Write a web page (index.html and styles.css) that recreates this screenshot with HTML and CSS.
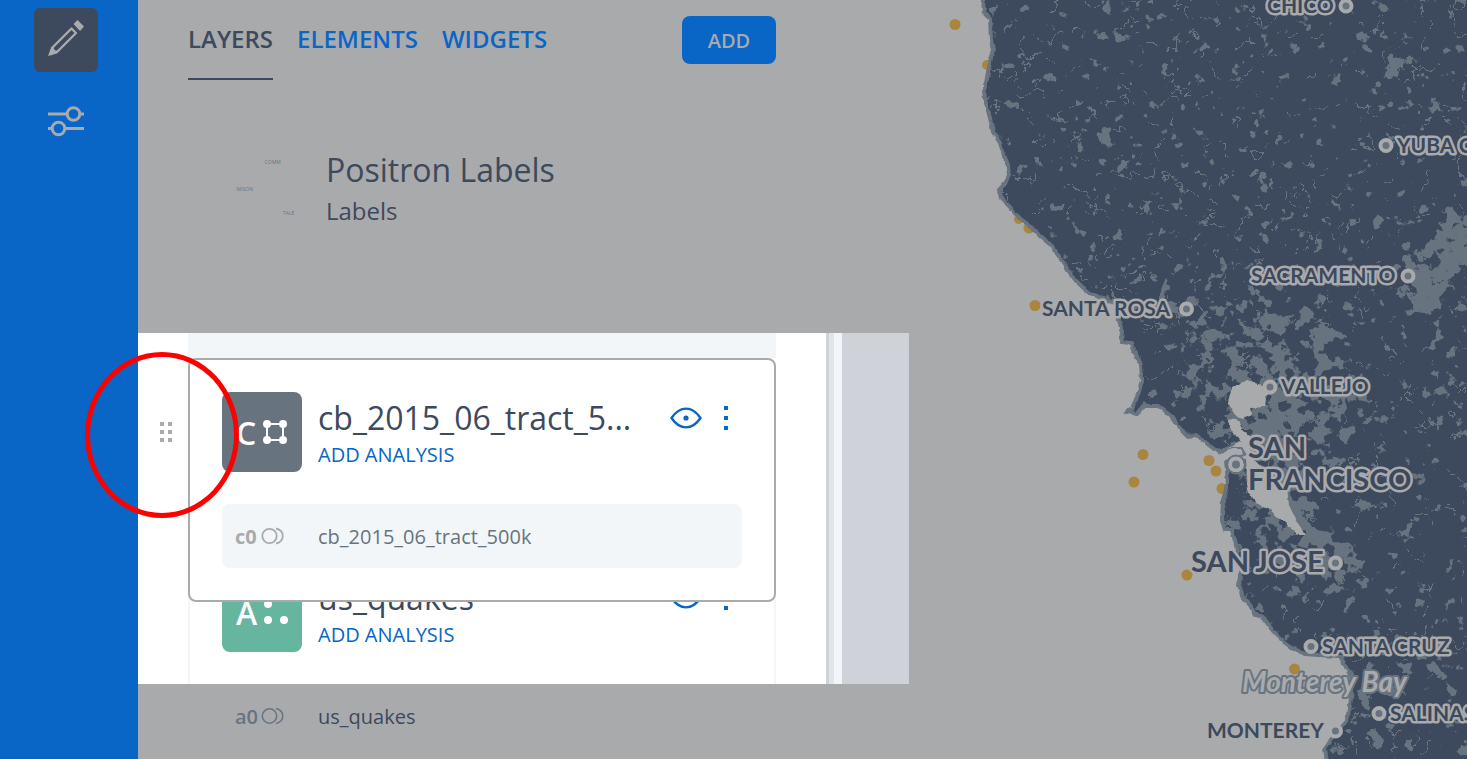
FILE: index.html
```html
<!DOCTYPE html>
<html lang="en">
<head>
<meta charset="utf-8">
<title>Layers</title>
<link rel="stylesheet" href="styles.css">
</head>
<body>
<div class="app">
  <nav class="sidebar" aria-label="Main">
    <button class="nav-button nav-active" aria-label="Edit">
      <svg width="64" height="64" viewBox="34 8 64 64" fill="none" stroke="#a9aaac" stroke-width="2.4">
        <path d="M71.500 28.500 L53 47 L50.500 54 L57.500 51.500 L76 33 Z" stroke-linejoin="round"/>
        <path d="M48 56 L51.500 46.500 L58 53 Z" fill="#a9aaac" stroke="none"/>
        <path d="M73.500 24 L77.500 20 L84 26.500 L80 31 Z" fill="#a9aaac" stroke="none"/>
      </svg>
    </button>
    <button class="nav-button" aria-label="Settings">
      <svg width="64" height="64" viewBox="34 89 64 64" fill="none" stroke="#a9aaac" stroke-width="3">
        <path d="M48 114 H67 M80 114 H84 M48 128.500 H52 M65 128.500 H84"/>
        <circle cx="73.500" cy="114" r="6.300"/>
        <circle cx="58.500" cy="128.500" r="6.300"/>
      </svg>
    </button>
  </nav>

  <main class="panel">
    <section class="panel-top">
      <header class="tabs">
        <button class="tab tab-active">LAYERS</button>
        <button class="tab">ELEMENTS</button>
        <button class="tab">WIDGETS</button>
        <button class="add">ADD</button>
      </header>
      <div class="basemap">
        <svg class="thumb" width="80" height="80" viewBox="222 150 80 80" aria-hidden="true">
          <text x="262" y="164">· COMM</text>
          <text x="234" y="191">· MISON</text>
          <text x="283" y="215">TALE</text>
        </svg>
        <div class="basemap-text">
          <h2 class="title">Positron Labels</h2>
          <p class="kind">Labels</p>
        </div>
      </div>
    </section>

    <section class="focus">
      <div class="list">
        <div class="gap-band"></div>
        <div class="drag-row">
          <button class="handle" aria-label="Reorder layer">
            <svg width="12" height="20" viewBox="0 0 12 20" fill="#a9aaac"><path d="M0 0h4v4H0zM8 0h4v4H8zM0 8h4v4H0zM8 8h4v4H8zM0 16h4v4H0zM8 16h4v4H8z"/></svg>
          </button>
          <article class="card card-lifted">
            <div class="card-head">
              <div class="badge"><span>C</span>
                <svg width="26" height="26" viewBox="0 0 26 26" fill="#fff"><path d="M5 5H21V21H5Z" fill="none" stroke="#fff" stroke-width="2"/><circle cx="5" cy="5" r="4"/><circle cx="21" cy="5" r="4"/><circle cx="5" cy="21" r="4"/><circle cx="21" cy="21" r="4"/></svg>
              </div>
              <div class="card-text">
                <h2 class="title">cb_2015_06_tract_5...</h2>
                <a class="analysis" href="#">ADD ANALYSIS</a>
              </div>
              <button class="icon-button" aria-label="Toggle visibility">
                <svg width="32" height="22" viewBox="0 0 32 22" fill="none" stroke="#0965c6" stroke-width="2.400"><path d="M1.500 11 C10 -1.500 22 -1.500 30.500 11 C22 23.500 10 23.500 1.500 11Z"/><circle cx="16" cy="11" r="2.600" fill="#0965c6" stroke="none"/></svg>
              </button>
              <button class="icon-button" aria-label="More">
                <svg width="4" height="24" viewBox="0 0 4 24" fill="#0965c6"><path d="M0 0h4v4H0zM0 10h4v4H0zM0 20h4v4H0z"/></svg>
              </button>
            </div>
            <div class="source">
              <b class="source-id">c0</b>
              <svg width="24" height="18" viewBox="0 0 24 18" fill="none" stroke="#a9aaac" stroke-width="1.800"><circle cx="8.500" cy="9" r="7.200"/><path d="M15 1.500 C24 3.500 24 14.500 15 16.500"/></svg>
              <span class="source-name">cb_2015_06_tract_500k</span>
            </div>
          </article>
        </div>
        <article class="card card-under">
          <div class="card-head">
            <div class="badge badge-green"><span>A</span>
              <svg width="26" height="26" viewBox="0 0 26 26" fill="#fff"><circle cx="5" cy="5" r="4"/><circle cx="5" cy="21" r="4"/><circle cx="21" cy="21" r="4"/></svg>
            </div>
            <div class="card-text">
              <h2 class="title">us_quakes</h2>
              <a class="analysis" href="#">ADD ANALYSIS</a>
            </div>
            <button class="icon-button" aria-label="Toggle visibility">
              <svg width="32" height="22" viewBox="0 0 32 22" fill="none" stroke="#0965c6" stroke-width="2.400"><path d="M1.500 11 C10 -1.500 22 -1.500 30.500 11 C22 23.500 10 23.500 1.500 11Z"/><circle cx="16" cy="11" r="2.600" fill="#0965c6" stroke="none"/></svg>
            </button>
            <button class="icon-button" aria-label="More">
              <svg width="4" height="24" viewBox="0 0 4 24" fill="#0965c6"><path d="M0 0h4v4H0zM0 10h4v4H0zM0 20h4v4H0z"/></svg>
            </button>
          </div>
        </article>
      </div>
      <div class="edge edge-a"></div>
      <div class="edge edge-b"></div>
      <div class="edge edge-c"></div>
      <div class="water"></div>
    </section>

    <section class="panel-bottom">
      <div class="source source-dim">
        <b class="source-id">a0</b>
        <svg width="24" height="18" viewBox="0 0 24 18" fill="none" stroke="#677480" stroke-width="1.500"><circle cx="8.500" cy="9" r="7.200"/><path d="M15 1.500 C24 3.500 24 14.500 15 16.500"/></svg>
        <span class="source-name">us_quakes</span>
      </div>
    </section>
  </main>

  <div class="map">
    <svg class="map-canvas" viewBox="909 0 558 759" preserveAspectRatio="xMinYMin slice" role="img" aria-label="Map of northern California">
      <defs>
        <clipPath id="land-clip"><use href="#land"/></clipPath>
        <filter id="rough" x="-5%" y="-5%" width="110%" height="110%">
          <feTurbulence type="fractalNoise" baseFrequency="0.150" numOctaves="2" seed="4"/>
          <feDisplacementMap in="SourceGraphic" scale="4" xChannelSelector="R" yChannelSelector="G"/>
        </filter>
        <filter id="veins" filterUnits="userSpaceOnUse" x="909" y="0" width="558" height="759" color-interpolation-filters="sRGB">
          <feTurbulence type="fractalNoise" baseFrequency="0.028" numOctaves="4" seed="21" result="t"/>
          <feColorMatrix values="0 0 0 0 0  0 0 0 0 0  0 0 0 0 0  1 0 0 0 0"/>
          <feComponentTransfer result="line"><feFuncA type="discrete" tableValues="0 0 0 0 0 0 0 0 0 0 0 0 0 0 0 0 0 0 0 0 0 0 0 0 0 0 0 0 0 0 1 0 0 0 0 0 0 0 0 0 0 0 0 0 0 0 0 0 0 0 0 0 0 0 0 0 0 0 0 0"/></feComponentTransfer>
          <feTurbulence type="fractalNoise" baseFrequency="0.060" numOctaves="3" seed="3"/>
          <feColorMatrix values="0 0 0 0 0  0 0 0 0 0  0 0 0 0 0  0 20 0 0 -10.400"/>
          <feComposite in="line" operator="in" result="x"/>
          <feFlood flood-color="#677480"/>
          <feComposite in2="x" operator="in"/>
        </filter>
        <filter id="urban" filterUnits="userSpaceOnUse" x="909" y="0" width="558" height="759" color-interpolation-filters="sRGB">
          <feTurbulence type="fractalNoise" baseFrequency="0.070" numOctaves="4" seed="7"/>
          <feColorMatrix values="0 0 0 0 0  0 0 0 0 0  0 0 0 0 0  1 0 0 0 0" result="n"/>
          <feGaussianBlur in="SourceAlpha" stdDeviation="8" result="d"/>
          <feComposite in="n" in2="d" operator="arithmetic" k1="0" k2="1" k3="0.400" k4="0"/>
          <feComponentTransfer result="x"><feFuncA type="linear" slope="20" intercept="-13.600"/></feComponentTransfer>
          <feFlood flood-color="#677480"/>
          <feComposite in2="x" operator="in"/>
        </filter>
      </defs>

      <g class="quakes">
        <circle cx="955" cy="24.500" r="5.500"/><circle cx="987" cy="65" r="5"/><circle cx="1019" cy="219" r="5"/><circle cx="1029" cy="228" r="5.500"/>
        <circle cx="1035" cy="305.500" r="5.500"/><circle cx="1143" cy="454.500" r="5.500"/><circle cx="1134" cy="482" r="5.500"/>
        <circle cx="1209" cy="460.500" r="5.500"/><circle cx="1216" cy="471" r="5.500"/><circle cx="1222" cy="488.500" r="5.500"/>
        <circle cx="1187" cy="575" r="5.500"/><circle cx="1294.500" cy="669" r="5.500"/>
      </g>

      <g filter="url(#rough)">
        <path id="land" class="land" d="M982 -9 L984 12 990 18 991 40 993 50 990 62 988 72 986 83 984 90 985 100 990 118 993 132 1000 143 1004 155 1008 165 1009 175 1006 182 999 190 1001 198 1010 207 1018 217 1030 226 1040 236 1052 246 1060 258 1068 270 1076 281 1090 294 1104 299 1116 304 1119 320 1122 332 1121 342 1131 343 1134 352 1141 365 1142 380 1138 395 1132 408 1127 412 1137 414 1143 406 1158 406 1172 417 1182 431 1187 436 1196 435 1205 442 1218 452 1232 447 1242 447 1247 455 1226 462 1228 480 1223 500 1222 520 1225 530 1232 530 1236 545 1238 560 1242 568 1240 575 1239 585 1243 598 1250 605 1255 615 1263 617 1272 630 1283 641 1292 648 1305 654 1318 655 1340 656 1345 665 1350 675 1352 690 1350 705 1347 720 1338 730 1330 740 1325 748 1328 770 H1800 V-9 Z"/>
      </g>
      <g clip-path="url(#land-clip)">
        <path filter="url(#veins)" d="M909 0H1467V759H909Z"/>
        <g filter="url(#urban)" fill="#000">
          <path fill-opacity="0.350" d="M1160 280 L1330 300 1360 420 1340 480 1300 480 1320 540 1360 600 1300 600 1225 520 1210 440 1180 420Z"/>
          <path fill-opacity="0.400" d="M1225 350 L1400 400 1330 430 1230 430Z"/>
          <path fill-opacity="0.700" d="M1222 455 L1246 470 1262 515 1305 545 1330 575 1370 590 1355 550 1320 525 1300 480 1285 435 1262 415 1248 425 1250 450Z"/>
          <path fill-opacity="0.850" d="M1450 200 L1480 230 1480 265 1450 285 1435 320 1410 310 1400 270 1420 250 1440 225Z"/>
          <path fill-opacity="0.350" d="M1250 315 h40 v40 h-50z M1300 310 h40 v45 h-30z M1430 360 h30 l10 60 -20 20z M1400 650h70v30h-70z M1355 650h30v100h-35z M1080 130h40v30h-40z M1370 45h50v40h-50z"/>
        </g>
        <path class="water-shape" filter="url(#rough)" d="M1232 387 L1247 380 1262 385 1272 389 1266 397 1265 407 1250 408 1252 415 1243 419 1233 412 1228 403Z M1228 420 L1236 418 1243 430 1251 437 1250 455 1262 468 1287 488 1289 505 1297 522 1306 535 1298 535 1285 523 1270 510 1256 503 1248 490 1246 459 1218 456 1230 448 1241 441 1230 430Z"/>
      </g>

      <g class="towns">
        <circle cx="1346" cy="6" r="5.500"/><circle cx="1386" cy="145.500" r="5.500"/><circle cx="1408" cy="276" r="5.500"/><circle cx="1186.500" cy="309" r="5.500"/>
        <circle cx="1270" cy="387" r="5.500"/><circle cx="1236" cy="464.500" r="6"/><circle cx="1335.500" cy="563" r="5.500"/><circle cx="1311" cy="646.500" r="5.500"/>
        <circle cx="1379" cy="713.500" r="5.500"/><circle cx="1335.500" cy="731" r="5.500"/>
      </g>
      <circle cx="1236" cy="464.500" r="9" fill="none" stroke="#677480" stroke-width="2"/>
      <g class="labels">
        <text x="1267" y="13">CHICO</text>
        <text x="1397" y="153">YUBA CITY</text>
        <text x="1251" y="283">SACRAMENTO</text>
        <text x="1042" y="316">SANTA ROSA</text>
        <text x="1281" y="394">VALLEJO</text>
        <text x="1322" y="654">SANTA CRUZ</text>
        <text x="1390" y="721">SALINAS</text>
        <text x="1207" y="738">MONTEREY</text>
        <g class="labels-large">
          <text x="1248" y="458">SAN</text>
          <text x="1248" y="490">FRANCISCO</text>
          <text x="1191" y="572">SAN JOSE</text>
        </g>
      </g>
      <text class="bay-label" x="1242" y="692">Monterey Bay</text>
    </svg>
  </div>
  <div class="callout"></div>
</div>
</body>
</html>
```
FILE: styles.css
```css
* { box-sizing: border-box; }
body {
  margin: 0;
  background: #a9aaac;
  color: #3d495c;
  font-family: "Open Sans", "Noto Sans", sans-serif;
}
button {
  padding: 0;
  border: 0;
  background: none;
  color: inherit;
  font: inherit;
}
h2, p { margin: 0; font-weight: 400; }
svg { display: block; flex: none; }

.app {
  position: relative;
  display: flex;
  height: 100vh;
  overflow: hidden;
}
.sidebar {
  flex: none;
  display: flex;
  flex-direction: column;
  gap: 17px;
  width: 138px;
  padding: 8px 34px;
  background: #0965c6;
}
.nav-button { width: 64px; height: 64px; border-radius: 6px; }
.nav-active { background: #3d495c; }

.panel { flex: none; width: 771px; }
.panel-top { height: 333px; padding: 0 133px 0 50px; }
.tabs {
  display: flex;
  align-items: center;
  gap: 24px;
  height: 80px;
}
.tab {
  height: 80px;
  border-bottom: 2px solid transparent;
  color: #0965c6;
  font-size: 24px;
  line-height: 76px;
  font-weight: 600;
}
.tab-active { border-color: #3d495c; color: #3d495c; }
.add {
  width: 94px;
  height: 48px;
  margin-left: auto;
  border-radius: 8px;
  background: #0965c6;
  color: #a9aaac;
  font-size: 20px;
  font-weight: 600;
}
.basemap { display: flex; gap: 24px; padding: 66px 34px 0; }
.thumb { margin-top: 4px; }
.thumb text { fill: #677480; font-size: 5px; }
.title { font-size: 32px; line-height: 48px; white-space: nowrap; }
.kind { font-size: 24px; line-height: 34px; }

.focus { display: flex; background: #fff; overflow: hidden; }
.list { flex: 1; padding-right: 50px; }
.gap-band { height: 25px; margin-left: 50px; background: #f2f6f9; }
.drag-row { position: relative; z-index: 1; display: flex; align-items: flex-start; }
.handle {
  flex: none;
  width: 50px;
  padding: 64px 16px 0 22px;
}
.card { background: #fff; border: 2px solid #f2f6f9; padding: 32px; }
.card-lifted { flex: 1; border-color: #a9aaac; border-radius: 8px; }
.card-under { margin: -64px 0 0 50px; border-bottom: 0; }
.card-head { display: flex; align-items: flex-start; }
.badge {
  flex: none;
  display: flex;
  align-items: center;
  gap: 6px;
  width: 80px;
  height: 80px;
  padding-left: 14px;
  border-radius: 8px;
  background: #677480;
  color: #fff;
  font-size: 32px;
  font-weight: 600;
}
.badge-green { background: #66b59f; }
.card-text { flex: 1; padding-left: 16px; }
.card-text .title { line-height: 52px; }
.analysis {
  display: block;
  color: #0965c6;
  font-size: 20px;
  line-height: 22px;
  text-decoration: none;
}
.icon-button { display: flex; align-items: center; height: 52px; margin-right: 22px; }
.icon-button:last-child { margin-right: 14px; }
.source {
  display: flex;
  align-items: center;
  gap: 4px;
  height: 64px;
  margin-top: 32px;
  padding-left: 13px;
  border-radius: 8px;
  background: #f2f6f9;
  color: #677480;
  font-size: 20px;
}
.source-id { color: #a9aaac; font-weight: 700; width: 22px; }
.source-name { margin-left: 29px; }
.edge-a { width: 3px; background: #cfd2d8; }
.edge-b { width: 5px; background: #e1e5e9; }
.edge-c { width: 8px; background: #f2f6f9; }
.water { width: 67px; background: #cfd2d8; }

.panel-bottom { padding: 0 50px 0 84px; }
.source-dim { margin-top: 0; background: none; color: #3d495c; }
.source-dim .source-id { color: #677480; font-weight: 600; }

.map { flex: 1; min-width: 0; }
.map-canvas { width: 100%; height: 100%; }
.land { fill: #3d495c; stroke: #677480; stroke-width: 4px; }
.water-shape { fill: #a9aaac; }
.quakes { fill: #a98640; }
.towns { fill: #677480; stroke: #a9aaac; stroke-width: 4px; }
.labels {
  fill: #3d495c;
  stroke: #a9aaac;
  stroke-width: 5px;
  stroke-linejoin: round;
  paint-order: stroke;
  font-family: Lato, sans-serif;
  font-size: 21px;
  font-weight: 700;
}
.labels-large { font-size: 29px; }
.bay-label {
  fill: #a9aaac;
  stroke: #677480;
  stroke-width: 4px;
  stroke-linejoin: round;
  paint-order: stroke;
  font-family: Lato, sans-serif;
  font-size: 28px;
  font-style: italic;
  font-weight: 700;
}
.callout {
  position: absolute;
  z-index: 2;
  left: 85px;
  top: 352px;
  width: 154px;
  height: 166px;
  border: 5px solid #f00;
  border-radius: 50%;
  pointer-events: none;
}
```
